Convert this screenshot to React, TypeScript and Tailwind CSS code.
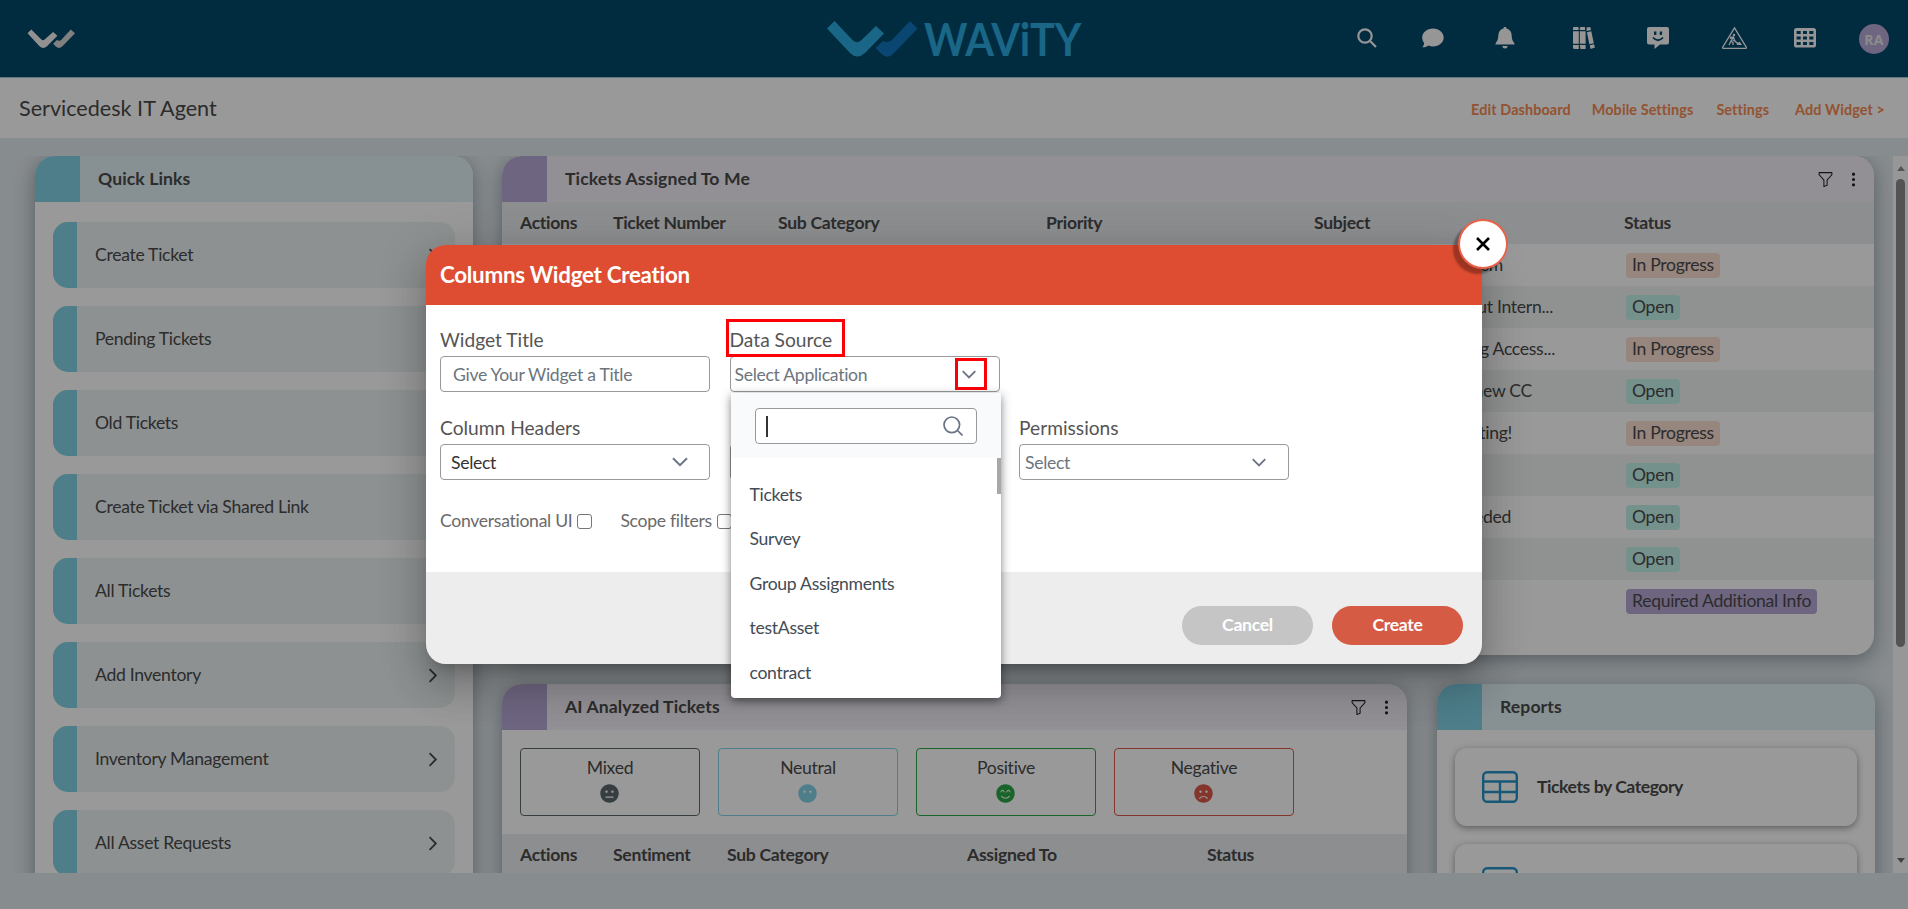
import type { ReactNode } from 'react'
import { BsFunnel, BsThreeDotsVertical } from 'react-icons/bs'
import { FaFrown, FaMeh, FaMehBlank, FaSmileBeam } from 'react-icons/fa'

const quickLinks = [
  'Create Ticket',
  'Pending Tickets',
  'Old Tickets',
  'Create Ticket via Shared Link',
  'All Tickets',
  'Add Inventory',
  'Inventory Management',
  'All Asset Requests',
]

type Status = 'In Progress' | 'Open' | 'Required Additional Info'

const tickets: { subject: string; width: string; status: Status }[] = [
  { subject: 'prism', width: 'w-[189px]', status: 'In Progress' },
  { subject: 'out Intern...', width: 'w-[239px]', status: 'Open' },
  { subject: 'ing Access...', width: 'w-[241px]', status: 'In Progress' },
  { subject: 'new CC', width: 'w-[218px]', status: 'Open' },
  { subject: 'Testing!', width: 'w-[198px]', status: 'In Progress' },
  { subject: '', width: 'w-[198px]', status: 'Open' },
  { subject: 'Needed', width: 'w-[197px]', status: 'Open' },
  { subject: '', width: 'w-[198px]', status: 'Open' },
  { subject: '', width: 'w-[198px]', status: 'Required Additional Info' },
]

const sentiments = [
  { label: 'Mixed', box: 'border-[#5c686e]', icon: 'text-[#5c686e]', Icon: FaMeh },
  { label: 'Neutral', box: 'border-[#80d2e6]', icon: 'text-[#80d2e6]', Icon: FaMehBlank },
  { label: 'Positive', box: 'border-[#28a745]', icon: 'text-[#28a745]', Icon: FaSmileBeam },
  { label: 'Negative', box: 'border-[#dc5a4a]', icon: 'text-[#dc5a4a]', Icon: FaFrown },
]

const sources = ['Tickets', 'Survey', 'Group Assignments', 'testAsset', 'contract']

function statusClass(status: Status): string {
  if (status === 'In Progress') return 'bg-[#fadfd3]'
  if (status === 'Open') return 'bg-[#c3f2ea]'
  return 'bg-[#b7a9d6]'
}

function Chevron({ className }: { className: string }) {
  return (
    <svg viewBox="0 0 16 10" className={className} fill="none" stroke="currentColor" strokeWidth="2">
      <path d="M1 1.2l7 7 7-7" />
    </svg>
  )
}

function TopBar() {
  return (
    <header className="flex h-[78px] items-start border-b border-[#9fc6d6] bg-[#03486a]">
      <svg viewBox="0 0 90 36" className="mt-[29px] ml-[27px] h-[20px] w-[48px]">
        <path d="M1 7L8 0 27 19Q30 22 33 19L49 5 57 12 37 32Q30 38 23 31Z" fill="#f2f2f2" />
        <path d="M49 27L56 20Q62 23 65 19L82 0 90 7 67 31Q60 38 54 32Z" fill="#d5d5d5" />
      </svg>
      <svg viewBox="0 0 256 40" className="mt-[19px] ml-[752px] h-[40px] w-[256px] overflow-visible">
        <path d="M0 9.500L7.500 2 26 21.500Q30 25 34 21.500L49 7 57 14.500 38 34Q30 41 23 34Z" fill="#2aaae0" />
        <path d="M48.500 29L56 22Q61 24.500 65 21L83 2 90.500 9.500 67 34Q60.500 41 54 34.500Z" fill="#1276bf" />
        <text
          x="97"
          y="37"
          fontFamily="Lato, sans-serif"
          fontSize="46"
          fontWeight="700"
          fill="#2aaae0"
          textLength="157"
          lengthAdjust="spacingAndGlyphs"
        >
          WAViTY
        </text>
      </svg>
      <div className="ml-[274px] flex items-start pt-[27px] text-[#fafafa]">
        <svg viewBox="0 0 20 20" className="mt-px h-[20px] w-[20px]" fill="none" stroke="currentColor" strokeWidth="2.200">
          <circle cx="8" cy="8" r="6.700" />
          <path d="M12.800 12.800L19 19" />
        </svg>
        <svg viewBox="0 0 22 20" className="mt-px ml-[45px] h-[20px] w-[22px]" fill="currentColor">
          <path d="M11 0.500C17 0.500 21.700 4.500 21.700 9.500S17 18.400 11 18.400C9.300 18.400 7.800 18.100 6.400 17.500 5 18.700 2.800 19.500 0.200 19.300 1.300 18.200 2 16.800 2.100 15 0.900 13.500 0.200 11.600 0.200 9.500 0.200 4.500 5 0.500 11 0.500Z" />
        </svg>
        <svg viewBox="0 0 20 22" className="ml-[51px] h-[22px] w-[20px]" fill="currentColor">
          <path d="M10 0C11 0 11.600 0.700 11.600 1.600 15 2.300 16.500 5 16.700 8.500 16.900 12.500 17.500 13.500 19.500 16.500V17.500H0.500V16.500C2.500 13.500 3.100 12.500 3.300 8.500 3.500 5 5 2.300 8.400 1.600 8.400 0.700 9 0 10 0Z" />
          <path d="M7.300 19H12.700C12.500 20.700 11.500 21.500 10 21.500S7.500 20.700 7.300 19Z" />
        </svg>
        <svg viewBox="0 0 22 22" className="ml-[58px] h-[22px] w-[22px]" fill="currentColor">
          <path d="M0.500 0H5.500V3H0V1ZM0 4.200H5.800V16.800H0ZM0 18H5.800V22H1L0 21Z" />
          <path d="M7.500 0H12V3H6.800V1ZM6.800 4.200H12.600V16.800H6.800ZM6.800 18H12.600V22H7.500Z" />
          <path d="M13.500 0.500L17.300 0 18 3 13.600 4ZM13.900 5.200L18.300 4.200 20.800 16.200 16.400 17.200ZM16.700 18.300L21.100 17.300 21.900 20.600 17.600 22Z" />
        </svg>
        <svg viewBox="0 0 22 22" className="ml-[52px] h-[22px] w-[22px]">
          <path d="M2 0H20Q22 0 22 2V15.500Q22 17.500 20 17.500H13L7.500 22V17.500H2Q0 17.500 0 15.500V2Q0 0 2 0Z" fill="currentColor" />
          <rect x="7" y="4.500" width="2.400" height="3.400" fill="#03486a" />
          <rect x="12.700" y="4.500" width="2.400" height="3.400" fill="#03486a" />
          <path d="M6 10.500Q11 16 16 10.500" stroke="#03486a" strokeWidth="1.800" fill="none" />
        </svg>
        <svg viewBox="0 0 25 22" className="ml-[53px] h-[22px] w-[25px]" fill="none" stroke="currentColor">
          <path d="M12.500 0.800L24.300 20.200Q24.500 21.300 23.500 21.300H1.500Q0.500 21.300 0.700 20.200Z" strokeWidth="1.300" />
          <circle cx="12" cy="8" r="1.200" fill="currentColor" stroke="none" />
          <path d="M8 10.500L11.500 10 12.500 13.500 16 17M11.500 10L9 14 11 15.500V18M9 14L7 18M8 11L17 17" strokeWidth="1.300" />
          <path d="M14.500 18L17.500 14.500 20 18Z" fill="currentColor" stroke="none" />
        </svg>
        <svg viewBox="0 0 22 20" className="mt-px ml-[47px] h-[20px] w-[22px]">
          <rect width="22" height="19.500" rx="2.600" fill="currentColor" />
          <path
            d="M2.600 3H6.700V6H2.600ZM9 3H13V6H9ZM15.300 3H19.400V6H15.300ZM2.600 8.500H6.700V11.500H2.600ZM9 8.500H13V11.500H9ZM15.300 8.500H19.400V11.500H15.300ZM2.600 14H6.700V17H2.600ZM9 14H13V17H9ZM15.300 14H19.400V17H15.300Z"
            fill="#03486a"
          />
        </svg>
        <div className="-mt-[3px] ml-[43px] flex h-[30px] w-[30px] items-center justify-center rounded-full bg-[#b7aad5] font-['Open_Sans',sans-serif] text-[14px] font-bold tracking-[0.3px] text-[#e8e8e8]">
          RA
        </div>
      </div>
    </header>
  )
}

type CardProps = {
  title: string
  tone: 'teal' | 'purple'
  actions?: boolean
  className: string
  children: ReactNode
}

function Card({ title, tone, actions, className, children }: CardProps) {
  return (
    <section
      className={`shrink-0 overflow-hidden rounded-[20px] bg-white shadow-[0_5px_20px_rgba(40,60,70,0.45)] ${className}`}
    >
      <div
        className={`flex h-[46px] items-center ${tone === 'teal' ? 'bg-[#e2f0f4]' : 'bg-[#f3f0f8]'}`}
      >
        <div className={`h-full w-[45px] ${tone === 'teal' ? 'bg-[#80d2e6]' : 'bg-[#b7a9d6]'}`} />
        <h2 className="ml-[18px] flex-1 text-[17.6px] font-bold tracking-[0.1px]">{title}</h2>
        {actions && (
          <div className="flex items-center pr-[12px] text-[#222]">
            <BsFunnel className="h-[17px] w-[17px]" />
            <BsThreeDotsVertical className="ml-[11px] h-[17px] w-[17px]" />
          </div>
        )}
      </div>
      {children}
    </section>
  )
}

function QuickLinks() {
  return (
    <Card title="Quick Links" tone="teal" className="h-[760px] w-[438px]">
      <ul className="flex flex-col gap-[18px] px-[18px] pt-[20px]">
        {quickLinks.map(link => (
          <li key={link} className="flex h-[66px] items-center overflow-hidden rounded-[15px] bg-[#ecf2f3]">
            <div className="h-full w-[24px] bg-[#80d2e6]" />
            <span className="ml-[18px] flex-1">{link}</span>
            <Chevron className="mr-[14px] h-[9px] w-[16px] -rotate-90" />
          </li>
        ))}
      </ul>
    </Card>
  )
}

function TicketsTable() {
  return (
    <Card title="Tickets Assigned To Me" tone="purple" actions className="h-[499px] w-[1372px]">
      <div className="grid h-[42px] grid-cols-[93px_165px_268px_268px_310px_1fr] items-center bg-[#ebedf0] pl-[18px] font-bold">
        <span>Actions</span>
        <span>Ticket Number</span>
        <span>Sub Category</span>
        <span>Priority</span>
        <span>Subject</span>
        <span>Status</span>
      </div>
      {tickets.map((ticket, i) => (
        <div
          key={i}
          className={`flex h-[42px] items-center pl-[812px] ${i % 2 ? 'bg-[#f1f4f3]' : 'bg-white'}`}
        >
          <div className="w-[312px]">
            <p className={`text-right ${ticket.width}`}>{ticket.subject}</p>
          </div>
          <span className={`flex h-[25px] items-center rounded-[4px] px-[6px] ${statusClass(ticket.status)}`}>
            {ticket.status}
          </span>
        </div>
      ))}
    </Card>
  )
}

function AnalyzedTickets() {
  return (
    <Card title="AI Analyzed Tickets" tone="purple" actions className="h-[400px] w-[905px]">
      <div className="flex gap-[18px] p-[18px]">
        {sentiments.map(({ label, box, icon, Icon }) => (
          <div key={label} className={`flex h-[68px] w-[180px] flex-col items-center rounded-[4px] border ${box}`}>
            <span className="mt-[6px] leading-[26px]">{label}</span>
            <Icon className={`mt-[3px] mr-px h-[19px] w-[19px] ${icon}`} />
          </div>
        ))}
      </div>
      <div className="grid h-[42px] grid-cols-[93px_114px_240px_240px_1fr] items-center bg-[#ebedf0] pl-[18px] font-bold">
        <span>Actions</span>
        <span>Sentiment</span>
        <span>Sub Category</span>
        <span>Assigned To</span>
        <span>Status</span>
      </div>
    </Card>
  )
}

function ReportItem({ label }: { label: string }) {
  return (
    <div className="flex h-[78px] items-center rounded-[12px] bg-white pl-[27px] shadow-[0_2px_7px_rgba(0,0,0,0.4)]">
      <svg viewBox="0 0 36 32" className="h-[32px] w-[36px]" fill="none" stroke="#2593c4" strokeWidth="2.400">
        <rect x="1.200" y="1.200" width="33.600" height="29.600" rx="4" />
        <path d="M1 10.500H35M1 21H35M18 10.500V31" />
      </svg>
      <span className="ml-[19px] font-bold tracking-[-0.45px]">{label}</span>
    </div>
  )
}

function Reports() {
  return (
    <Card title="Reports" tone="teal" className="h-[400px] w-[438px]">
      <div className="flex flex-col gap-[18px] p-[18px]">
        <ReportItem label="Tickets by Category" />
        <ReportItem label="" />
      </div>
    </Card>
  )
}

function Scrollbar() {
  return (
    <div className="flex w-[15px] shrink-0 flex-col items-center bg-[#fcfcfc]">
      <div className="mt-[10px] h-0 w-0 border-x-[4px] border-b-[5px] border-x-transparent border-b-[#8a8a8a]" />
      <div className="mt-[8px] h-[468px] w-[9px] rounded-full bg-[#8b8b8b]" />
      <div className="mt-[211px] h-0 w-0 border-x-[4px] border-t-[5px] border-x-transparent border-t-[#707070]" />
    </div>
  )
}

function Field({ label, children }: { label: string; children: ReactNode }) {
  return (
    <div className="h-[88px] w-[270px]">
      <label className="block h-[29px] text-[19.2px] leading-[26px] tracking-normal text-[#555]">{label}</label>
      <div className="relative flex h-[36px] items-center justify-between rounded-[4px] border border-[#999] text-[#6c757d]">
        {children}
      </div>
    </div>
  )
}

function SourceMenu() {
  return (
    <div className="absolute top-[36px] left-0 z-10 h-[305px] w-[270px] overflow-hidden rounded-b-[4px] bg-white text-[#444c55] shadow-[0_3px_10px_rgba(0,0,0,0.5)]">
      <div className="flex h-[65px] items-start bg-[#f9fafc] pt-[15px] pl-[24px]">
        <div className="flex h-[36px] w-[222px] items-center rounded-[4px] border border-[#999] bg-white">
          <div className="ml-[10px] h-[21px] w-[2px] bg-[#333]" />
          <svg
            viewBox="0 0 20 20"
            className="ml-[175px] h-[20px] w-[20px]"
            fill="none"
            stroke="#6b7485"
            strokeWidth="1.700"
          >
            <circle cx="8.800" cy="8.800" r="7.800" />
            <path d="M14.500 14.500L19.500 19.500" />
          </svg>
        </div>
      </div>
      <div className="flex items-start justify-between">
        <ul className="pt-[15px] pl-[19px]">
          {sources.map(source => (
            <li key={source} className="flex h-[44.400px] items-center">
              {source}
            </li>
          ))}
        </ul>
        <div className="h-[36px] w-[4px] bg-[#a8a8a8]" />
      </div>
    </div>
  )
}

function Checkbox({ label }: { label: string }) {
  return (
    <label className="flex items-center text-[#6a6a6a]">
      {label}
      <span className="ml-[5px] h-[15px] w-[15px] rounded-[3px] border border-[#767676] bg-white" />
    </label>
  )
}

function WidgetModal() {
  return (
    <div className="absolute top-[245px] left-[426px] h-[419px] w-[1056px] rounded-[20px] shadow-[0_11px_15px_-7px_rgba(0,0,0,0.2),0_24px_38px_3px_rgba(0,0,0,0.14),0_9px_46px_8px_rgba(0,0,0,0.12)]">
      <div className="flex h-[60px] items-center rounded-t-[20px] bg-[#de4c31] pl-[14px]">
        <h1 className="text-[22.4px] font-bold tracking-[-0.3px] text-white">Columns Widget Creation</h1>
      </div>
      <div className="h-[267px] bg-white px-[14px] pt-[22px]">
        <div className="grid grid-cols-[270px_270px_270px] gap-x-[19.5px]">
          <Field label="Widget Title">
            <span className="pt-[2px] pl-[12px]">Give Your Widget a Title</span>
          </Field>
          <Field label="Data Source">
            <span className="pt-[2px] pl-[4px]">Select Application</span>
            <Chevron className="mr-[22px] h-[9px] w-[16px] text-[#6b7485]" />
            <div className="absolute -top-[38px] -left-[5px] h-[38px] w-[119px] border-[3px] border-[#fb0007]" />
            <div className="absolute top-[1px] right-[12px] h-[32px] w-[32px] border-[3px] border-[#fb0007]" />
            <SourceMenu />
          </Field>
          <span />
          <Field label="Column Headers">
            <span className="pt-[2px] pl-[10px] text-[#333]">Select</span>
            <Chevron className="mr-[20px] h-[10px] w-[18px] text-[#6b7485]" />
          </Field>
          <Field label="">
            <span />
          </Field>
          <Field label="Permissions">
            <span className="pt-[2px] pl-[5px]">Select</span>
            <Chevron className="mr-[21px] h-[9px] w-[16px] text-[#6b7485]" />
          </Field>
        </div>
        <div className="mt-[5px] flex gap-[28px]">
          <Checkbox label="Conversational UI" />
          <Checkbox label="Scope filters" />
        </div>
      </div>
      <div className="flex h-[92px] items-start justify-end gap-[19px] rounded-b-[20px] bg-[#ededed] pt-[34px] pr-[19px] font-bold text-white">
        <button className="h-[39px] w-[131px] rounded-full bg-[#c5c5c5]">Cancel</button>
        <button className="h-[39px] w-[131px] rounded-full bg-[#d65b44]">Create</button>
      </div>
      <button className="absolute -top-[26px] -right-[26px] flex h-[50px] w-[50px] items-center justify-center rounded-full border-2 border-[#e9614a] bg-white shadow-[-5px_5px_2px_rgba(0,0,0,0.3)]">
        <svg viewBox="0 0 14 14" className="h-[14px] w-[14px]" stroke="#000" strokeWidth="2.600">
          <path d="M1 1L13 13M13 1L1 13" />
        </svg>
      </button>
    </div>
  )
}

export default function App() {
  return (
    <div className="relative h-[909px] w-full overflow-hidden bg-[#e2e9ed] font-['Lato',sans-serif] text-[17.6px] tracking-[-0.3px] text-[#4a4a4a] [font-variant-ligatures:none]">
      <TopBar />
      <div className="flex h-[60px] items-center justify-between bg-white pr-[23px] pl-[19px]">
        <p className="text-[21.6px] tracking-normal">Servicedesk IT Agent</p>
        <nav className="flex pt-[4px] text-[14.4px] font-bold tracking-[0.1px] text-[#f58a53]">
          <span>Edit Dashboard</span>
          <span className="ml-[21px]">Mobile Settings</span>
          <span className="ml-[23px]">Settings</span>
          <span className="ml-[26px]">Add Widget &gt;</span>
        </nav>
      </div>
      <main className="mt-[18px] flex h-[717px] justify-between overflow-hidden">
        <div className="flex gap-[29px] pl-[35px]">
          <QuickLinks />
          <div className="flex flex-col gap-[29px]">
            <TicketsTable />
            <div className="flex gap-[30px]">
              <AnalyzedTickets />
              <Reports />
            </div>
          </div>
        </div>
        <Scrollbar />
      </main>
      <div className="absolute inset-0 bg-black/40" />
      <WidgetModal />
    </div>
  )
}
